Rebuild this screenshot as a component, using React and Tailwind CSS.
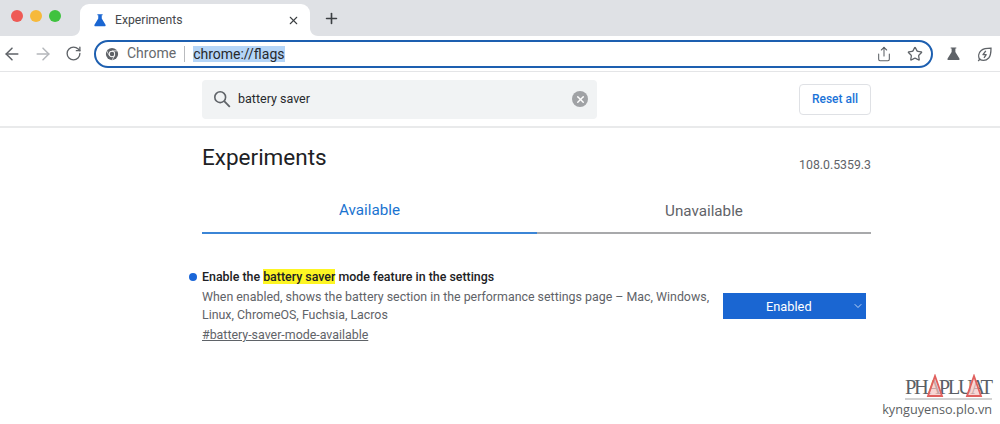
import { ArrowLeft, ArrowRight, RotateCw, X, Plus, Star, Share, ChevronDown } from "lucide-react";

function Flask({ className, color }) {
  return (
    <svg viewBox="0 0 16 16" className={className}>
      <path d="M5 1.500h6v1.200h-1v3.600l4.300 7c.5 1-.1 1.700-1 1.700H2.700c-.9 0-1.500-.7-1-1.700L6 6.300V2.700H5z" fill={color} />
    </svg>
  );
}

function ChromeLogo() {
  return (
    <svg viewBox="0 0 16 16" className="h-[14px] w-[14px]">
      <circle cx="8" cy="8" r="7" fill="#5f6368" />
      <circle cx="8" cy="8" r="3.6" fill="#fff" />
      <circle cx="8" cy="8" r="2.6" fill="#5f6368" />
      <path d="M8 4.400h6.300M5 9.900L1.900 4.400M11 9.900l-3.200 5.400" stroke="#fff" strokeWidth="0.8" />
    </svg>
  );
}

function Leaf() {
  return (
    <svg viewBox="0 0 16 16" className="h-[16px] w-[16px]" fill="none" stroke="#5f6368" strokeWidth="1.3">
      <path d="M2.600 13.400c-1.600-3-1-6.800 1.600-9 2.600-2 6.400-2.200 9.800-2.200 0 3.600-.1 7.400-2.300 9.800-2.300 2.400-6.100 2.800-9.100 1.400z" />
      <path d="M8.800 4.800 6 8.700h3.200l-2.200 3.200" strokeLinejoin="round" />
      <path d="M1.200 15 3.400 12.600" />
    </svg>
  );
}

function SearchIcon() {
  return (
    <svg viewBox="0 0 18 18" className="h-[18px] w-[18px]" fill="none" stroke="#5f6368" strokeWidth="1.6">
      <circle cx="7.200" cy="7.200" r="5.400" />
      <path d="M11.200 11.200 16.800 16.800" strokeWidth="1.800" />
    </svg>
  );
}

// the small flared corners at the foot of the active tab
function TabFlare({ className, d }) {
  return (
    <svg viewBox="0 0 8 8" className={`absolute bottom-0 h-[8px] w-[8px] ${className}`}>
      <path d={d} fill="#fff" />
    </svg>
  );
}

function Watermark() {
  return (
    <div className="absolute right-[8px] bottom-[6px] flex flex-col items-end">
      <div className="relative flex h-[26px] w-[87px] items-end border-b-2 border-[#d2d2d2] font-['Liberation_Serif',serif] text-[20.500px] leading-[21px] tracking-[-2.400px] whitespace-nowrap text-[#5a5f66]">
        PHAPLUAT
        <svg viewBox="0 0 87 26" className="absolute top-0 left-0 h-[26px] w-[87px]">
          <path d="M23 22 30 2l7 20z" fill="#f4c4c2" fillOpacity="0.7" stroke="#e0605e" strokeWidth="1.800" />
          <path d="M62 22 69 2l7 20z" fill="#f4c4c2" fillOpacity="0.7" stroke="#e0605e" strokeWidth="1.800" />
        </svg>
      </div>
      <div className="font-['Open_Sans',sans-serif] text-[12.700px] leading-[18px] text-[#5c5f63]">kynguyenso.plo.vn</div>
    </div>
  );
}

export default function App() {
  return (
    <div className="relative h-[424px] w-[1000px] overflow-hidden bg-white font-['Roboto',sans-serif]">
      {/* tab strip */}
      <div className="flex h-[36px] bg-[#dfe1e5]">
        <div className="flex w-[80px] items-center gap-[7px] pb-[4px] pl-[11px]">
          <span className="h-[12px] w-[12px] rounded-full bg-[#ee5a55]" />
          <span className="h-[12px] w-[12px] rounded-full bg-[#f6b93b]" />
          <span className="h-[12px] w-[12px] rounded-full bg-[#3fc23f]" />
        </div>
        <div className="relative mt-[4px] flex h-[32px] w-[230px] items-center rounded-t-[9px] bg-white pr-[10px] pl-[13px]">
          <TabFlare className="-left-[8px]" d="M8 0v8H0c4 0 8-3 8-8z" />
          <TabFlare className="-right-[8px]" d="M0 0v8h8C4 8 0 5 0 0z" />
          <Flask className="h-[14px] w-[14px]" color="#1a66d2" />
          <span className="ml-[8px] flex-1 text-[12.200px] text-[#45484c]">Experiments</span>
          <X size={13} strokeWidth={2} color="#3c4043" />
        </div>
        <div className="flex items-center pl-[13px]">
          <Plus size={17} strokeWidth={2.3} color="#3c4043" />
        </div>
      </div>

      {/* toolbar */}
      <div className="flex h-[36px] items-center border-b border-[#e4e5e7] bg-white">
        <div className="flex w-[94px] items-center gap-[11px] pl-[2px]">
          <ArrowLeft size={20} strokeWidth={1.8} color="#5f6368" />
          <ArrowRight size={20} strokeWidth={1.8} color="#b4b7bb" />
          <RotateCw size={17} strokeWidth={1.9} color="#5f6368" className="ml-px" />
        </div>
        <div className="flex h-[28px] w-[839px] items-center rounded-full border-2 border-[#1d5fb0] pr-[8px] pl-[9px]">
          <ChromeLogo />
          <span className="ml-[8px] text-[14px] text-[#66696d]">Chrome</span>
          <span className="mx-[8px] h-[16px] w-px bg-[#b9bbbe]" />
          <span className="bg-[#b5d5f7] text-[14px] leading-[16px] text-[#27292c]">chrome://flags</span>
          <span className="flex-1" />
          <Share size={16} strokeWidth={1.6} color="#5f6368" />
          <Star size={16} strokeWidth={1.9} color="#5f6368" className="ml-[15px]" />
        </div>
        <Flask className="ml-[13px] h-[15px] w-[15px]" color="#5f6368" />
        <div className="ml-[16px]">
          <Leaf />
        </div>
      </div>

      {/* search strip */}
      <div className="flex h-[56px] items-center border-b-2 border-[#e9eaeb] pl-[202px]">
        <div className="flex h-[39px] w-[395px] items-center rounded-[4px] bg-[#f1f3f4] pr-[9px] pl-[11px]">
          <SearchIcon />
          <span className="ml-[7px] flex-1 text-[12.500px] text-[#27292c]">battery saver</span>
          <span className="flex h-[16px] w-[16px] items-center justify-center rounded-full bg-[#a0a2a5]">
            <X size={11} strokeWidth={3} color="#fff" />
          </span>
        </div>
        <button className="ml-[202px] h-[31px] w-[72px] rounded-[4px] border border-[#dfe1e5] text-[12px] font-medium text-[#1a73d8]">
          Reset all
        </button>
      </div>

      {/* content */}
      <div className="ml-[202px] w-[669px]">
        <div className="flex justify-between pt-[14px]">
          <h1 className="text-[22.500px] leading-[30px] text-[#202124]">Experiments</h1>
          <span className="mt-[15px] text-[12.300px] leading-[16px] text-[#5f6368]">108.0.5359.3</span>
        </div>
        <div className="mt-[26px] flex">
          <div className="h-[35px] w-[335px] border-b-2 border-[#3b85d6] pt-px text-center text-[15.200px] leading-[20px] text-[#1a73d0]">
            Available
          </div>
          <div className="h-[35px] w-[334px] border-b-2 border-[#a8a9ab] pt-[2px] text-center text-[15.200px] leading-[20px] text-[#5f6368]">
            Unavailable
          </div>
        </div>
        <div className="mt-[35px] flex items-start justify-between">
          <div className="w-[515px]">
            <div className="-ml-[13px] flex items-center gap-[5px] text-[12.400px] leading-[16px] font-medium text-[#202124]">
              <span className="-mt-px h-[8px] w-[8px] rounded-full bg-[#1a66d8]" />
              <span>
                Enable the <mark className="bg-[#fdf522] text-[#202124]">battery saver</mark> mode feature in the settings
              </span>
            </div>
            <p className="mt-[3px] text-[12.400px] leading-[18px] text-[#5f6368]">
              When enabled, shows the battery section in the performance settings page – Mac, Windows, Linux, ChromeOS, Fuchsia, Lacros
            </p>
            <a className="mt-[2px] block text-[12.400px] leading-[18px] text-[#5f6368] underline">#battery-saver-mode-available</a>
          </div>
          <div className="mt-[24px] mr-[5px] flex h-[26px] w-[143px] items-center bg-[#1a66d2] pr-[2px] pl-[43px] text-white">
            <span className="flex-1 pt-px text-[12.800px]">Enabled</span>
            <ChevronDown size={12} strokeWidth={1.8} color="#cfe0f7" />
          </div>
        </div>
      </div>

      <Watermark />
    </div>
  );
}
